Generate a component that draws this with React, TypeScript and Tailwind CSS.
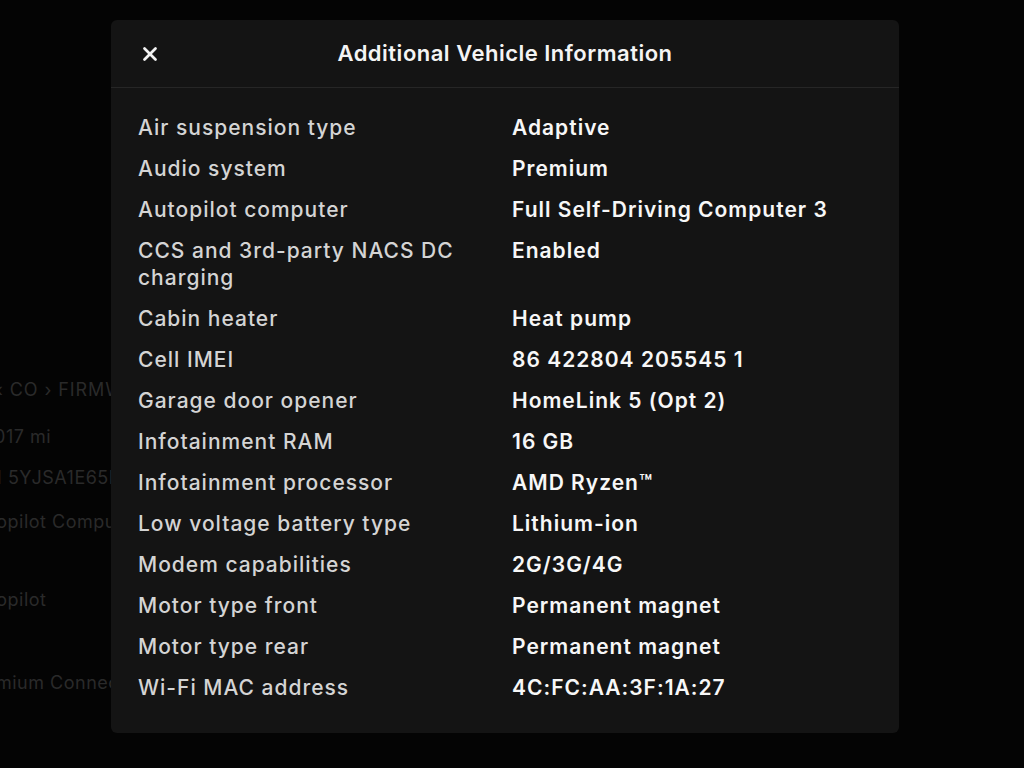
import { X } from 'lucide-react';

const rows: [string, string][] = [
  ['Air suspension type', 'Adaptive'],
  ['Audio system', 'Premium'],
  ['Autopilot computer', 'Full Self-Driving Computer 3'],
  ['CCS and 3rd-party NACS DC charging', 'Enabled'],
  ['Cabin heater', 'Heat pump'],
  ['Cell IMEI', '86 422804 205545 1'],
  ['Garage door opener', 'HomeLink 5 (Opt 2)'],
  ['Infotainment RAM', '16 GB'],
  ['Infotainment processor', 'AMD Ryzen™'],
  ['Low voltage battery type', 'Lithium-ion'],
  ['Modem capabilities', '2G/3G/4G'],
  ['Motor type front', 'Permanent magnet'],
  ['Motor type rear', 'Permanent magnet'],
  ['Wi-Fi MAC address', '4C:FC:AA:3F:1A:27'],
];

// faint page text behind the dialog
const behind = [
  { text: '‹ CO › FIRMWARE', className: 'mt-[380px] -ml-[4px] tracking-[0.05em]' },
  { text: '20,017 mi', className: 'mt-[27px] -ml-[34px]' },
  { text: 'VIN 5YJSA1E65B', className: 'mt-[21px] -ml-[30px]' },
  { text: 'Autopilot Computer', className: 'mt-[24px] -ml-[34px]' },
  { text: 'Autopilot', className: 'mt-[58px] -ml-[34px]' },
  { text: 'Premium Connectivity', className: 'mt-[63px] -ml-[34px]' },
];

export default function App() {
  return (
    <div
      className="relative h-[768px] w-[1024px] overflow-hidden bg-[#040404]"
      style={{ fontFamily: 'Inter, "Noto Sans", sans-serif' }}
    >
      <div className="flex flex-col text-[18px] tracking-[0.5px] text-[#2a2a2a]">
        {behind.map((b) => (
          <div key={b.text} className={`whitespace-nowrap leading-[20px] ${b.className}`}>
            {b.text}
          </div>
        ))}
      </div>

      <div className="absolute left-[111px] top-[20px] flex h-[713px] w-[788px] flex-col rounded-[6px] bg-[#141414]">
        <div className="relative flex h-[68px] items-center justify-center border-b border-[#262626]">
          <X className="absolute left-[28px] top-[23px] h-[22px] w-[22px] text-[#f2f2f2]" strokeWidth={3} />
          <div className="text-[22px] font-semibold tracking-[0.5px] text-[#f4f4f4]">
            Additional Vehicle Information
          </div>
        </div>
        <div className="flex flex-col gap-[14px] pl-[27px] pt-[26px]">
          {rows.map(([label, value]) => (
            <div key={label} className="flex text-[21px] leading-[27px] tracking-[1px]">
              <div className="w-[374px] pr-[30px] font-medium text-[#d4d4d4]">{label}</div>
              <div className="font-semibold text-[#f7f7f7]">{value}</div>
            </div>
          ))}
        </div>
      </div>
    </div>
  );
}
